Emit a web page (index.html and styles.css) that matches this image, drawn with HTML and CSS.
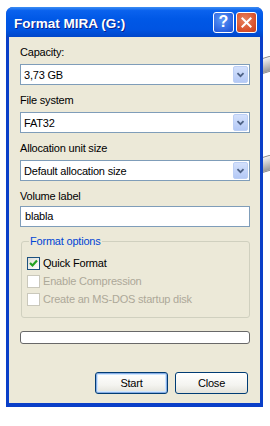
FILE: index.html
```html
<!DOCTYPE html>
<html lang="en">
<head>
  <meta charset="UTF-8" />
  <title>Format MIRA (G:)</title>
  <link rel="stylesheet" href="styles.css">
</head>
<body>

<div class="desktop">
  <span class="drive drive-top"></span>
  <span class="drive drive-mid"></span>

  <div class="window">
    <div class="titlebar">
      <span class="title">Format MIRA (G:)</span>
      <span class="tb-btn help">?</span>
      <span class="tb-btn close">
        <svg width="21" height="21" viewBox="0 0 21 21">
          <path d="M6 6 L15 15 M15 6 L6 15" stroke="#fff" stroke-width="2.2" stroke-linecap="square" />
        </svg>
      </span>
    </div>

    <div class="content">
      <div class="field-label">Capacity:</div>
      <div class="select">
        <span class="value">3,73 GB</span>
        <span class="arrow">
          <svg width="15" height="17" viewBox="0 0 15 17"><path d="M4 7 L7.5 10.5 L11 7" fill="none" stroke="#4d6185" stroke-width="2" /></svg>
        </span>
      </div>

      <div class="field-label">File system</div>
      <div class="select">
        <span class="value">FAT32</span>
        <span class="arrow">
          <svg width="15" height="17" viewBox="0 0 15 17"><path d="M4 7 L7.5 10.5 L11 7" fill="none" stroke="#4d6185" stroke-width="2" /></svg>
        </span>
      </div>

      <div class="field-label">Allocation unit size</div>
      <div class="select">
        <span class="value">Default allocation size</span>
        <span class="arrow">
          <svg width="15" height="17" viewBox="0 0 15 17"><path d="M4 7 L7.5 10.5 L11 7" fill="none" stroke="#4d6185" stroke-width="2" /></svg>
        </span>
      </div>

      <div class="field-label">Volume label</div>
      <div class="textbox">blabla</div>

      <fieldset class="group">
        <legend>Format options</legend>
        <div class="check-row">
          <span class="checkbox">
            <svg width="11" height="11" viewBox="0 0 11 11"><path d="M2 5 L4.5 7.5 L9 2.5" fill="none" stroke="#21a121" stroke-width="2.2" /></svg>
          </span>
          Quick Format
        </div>
        <div class="check-row disabled">
          <span class="checkbox"></span>
          Enable Compression
        </div>
        <div class="check-row disabled">
          <span class="checkbox"></span>
          Create an MS-DOS startup disk
        </div>
      </fieldset>

      <div class="progress"></div>

      <div class="actions">
        <button class="btn default">Start</button>
        <button class="btn">Close</button>
      </div>
    </div>
  </div>
</div>

</body>
</html>
```

FILE: styles.css
```css
body {
  margin: 0;
  background: #fff;
  font-family: "Liberation Sans", Arial, sans-serif;
  font-size: 11px;
  color: #000;
}

.desktop {
  position: relative;
  width: 270px;
  height: 426px;
  padding-top: 7px;
  box-sizing: border-box;
  overflow: hidden;
}

/* bits of drive icons peeking out behind the dialog */
.drive {
  position: absolute;
  left: 258px;
  width: 20px;
  height: 14px;
  border-radius: 3px;
  background: linear-gradient(#f2f2f2, #9a9a9a);
  border: 1px solid #8a8a8a;
  transform: skewY(-18deg);
}

.drive-top {
  top: 56px;
}

.drive-mid {
  top: 155px;
}

.window {
  position: relative;
  margin-left: 6px;
  width: 257px;
  height: 400px;
  display: flex;
  flex-direction: column;
  background: #0a3fc8;
  border-radius: 7px 7px 0 0;
}

.titlebar {
  height: 30px;
  display: flex;
  align-items: center;
  padding: 0 6px 0 8px;
  border-radius: 7px 7px 0 0;
  background: linear-gradient(to bottom, #3c8ef3 0%, #0a62ee 12%, #0058e6 40%, #0054e2 75%, #0046c9 100%);
}

.title {
  flex: 1;
  color: #fff;
  font-weight: bold;
  font-size: 13.5px;
  text-shadow: 1px 1px #0a1e8a;
  padding-top: 2px;
}

.tb-btn {
  width: 19px;
  height: 19px;
  border: 1px solid #fff;
  border-radius: 3px;
  display: flex;
  align-items: center;
  justify-content: center;
  color: #fff;
  overflow: hidden;
}

.help {
  margin-right: 2px;
  font-weight: bold;
  font-size: 16px;
  background: radial-gradient(circle at 40% 35%, #5b97f6, #2b63e0 70%, #1f52cf);
}

.close {
  background: radial-gradient(circle at 40% 35%, #e8835f, #d9512c 65%, #c2401d);
}

.content {
  flex: 1;
  margin: 0 3px 4px 3px;
  background: #ece9d8;
  padding: 9px 10px 0 11px;
  letter-spacing: -0.2px;
}

.field-label {
  height: 13px;
  line-height: 13px;
  margin-bottom: 5px;
}

.select {
  height: 21px;
  box-sizing: border-box;
  border: 1px solid #7f9db9;
  background: #fff;
  display: flex;
  align-items: center;
  justify-content: space-between;
  padding: 0 1px 0 3px;
  margin-bottom: 9px;
}

.arrow {
  width: 15px;
  height: 17px;
  border-radius: 2px;
  background: linear-gradient(#d4e1fc, #b4c9f6);
  border: 1px solid #bccff5;
  box-sizing: border-box;
  display: flex;
  align-items: center;
  justify-content: center;
}

.textbox {
  height: 21px;
  box-sizing: border-box;
  border: 1px solid #7f9db9;
  background: #fff;
  line-height: 19px;
  padding-left: 4px;
  margin-top: -2px;
}

.group {
  margin: 8px 0 0 1px;
  width: 229px;
  box-sizing: border-box;
  border: 1px solid #d0d0bf;
  border-radius: 3px;
  padding: 6px 5px 9px 5px;
}

.group legend {
  color: #0046d5;
  padding: 0 1px;
  margin-left: 2px;
  line-height: 13px;
}

.check-row {
  height: 18px;
  display: flex;
  align-items: center;
  gap: 3px;
}

.checkbox {
  width: 13px;
  height: 13px;
  box-sizing: border-box;
  border: 1px solid #1c5180;
  background: linear-gradient(135deg, #dcdcd7, #fff);
  display: flex;
  align-items: center;
  justify-content: center;
}

.check-row.disabled {
  color: #aca899;
}

.check-row.disabled .checkbox {
  border-color: #cac8bb;
  background: #fff;
}

.progress {
  margin-top: 13px;
  width: 230px;
  height: 13px;
  box-sizing: border-box;
  border: 1px solid #686868;
  border-radius: 3px;
  background: #fff;
}

.actions {
  margin-top: 28px;
  display: flex;
  justify-content: flex-end;
  gap: 7px;
  padding-right: 2px;
}

.btn {
  width: 73px;
  height: 22px;
  border: 1px solid #003c74;
  border-radius: 3px;
  background: linear-gradient(#ffffff, #f4f4f0 60%, #e3e2da);
  font-family: "Liberation Sans", Arial, sans-serif;
  font-size: 11px;
  letter-spacing: -0.2px;
  color: #000;
  padding: 0;
}

.btn.default {
  box-shadow: inset 0 0 0 1px #89ade4, inset 0 0 0 2px #cee7ff;
}
```
